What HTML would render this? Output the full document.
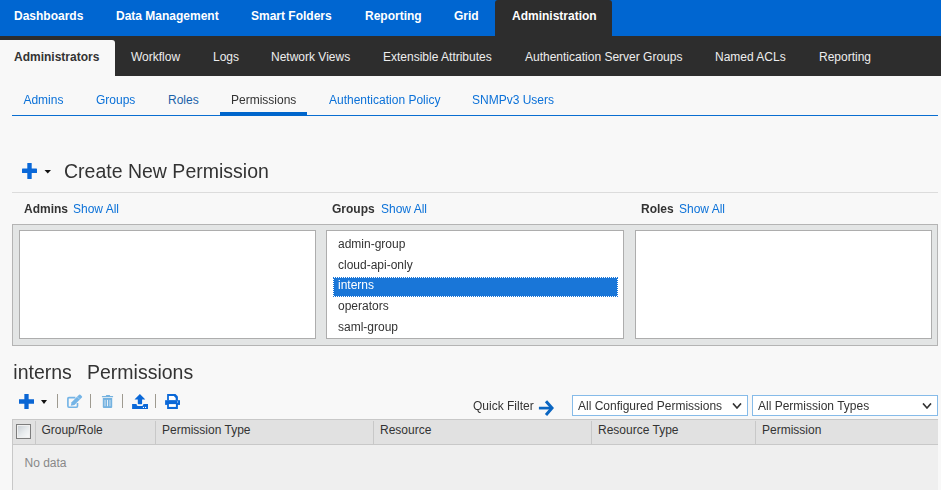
<!DOCTYPE html>
<html><head><meta charset="utf-8">
<style>
html,body{margin:0;padding:0;}
body{width:941px;height:490px;overflow:hidden;position:relative;background:#f8f8f8;font-family:"Liberation Sans",sans-serif;font-size:12px;color:#333;}
.a{position:absolute;}
.t{position:absolute;white-space:nowrap;line-height:16px;font-size:12px;}
.b{font-weight:bold;}
.w{color:#fff;}
.lk{color:#0b71d8;}
.dk{color:#333;}
</style></head><body>

<!-- top nav -->
<div class="a" style="left:0;top:0;width:941px;height:36px;background:#0066d1;"></div>
<div class="a" style="left:495px;top:0;width:117px;height:36px;background:#2d2d2d;border-radius:3px 3px 0 0;"></div>
<div class="t b w" style="left:14px;top:8px;">Dashboards</div>
<div class="t b w" style="left:116px;top:8px;">Data Management</div>
<div class="t b w" style="left:251px;top:8px;">Smart Folders</div>
<div class="t b w" style="left:365px;top:8px;">Reporting</div>
<div class="t b w" style="left:454px;top:8px;">Grid</div>
<div class="t b w" style="left:512px;top:8px;">Administration</div>

<!-- second nav -->
<div class="a" style="left:0;top:36px;width:941px;height:40px;background:#2d2d2d;"></div>
<div class="a" style="left:0;top:40px;width:115px;height:36px;background:#f8f8f8;border-radius:0 3px 0 0;"></div>
<div class="t b dk" style="left:14px;top:49px;">Administrators</div>
<div class="t w" style="left:131px;top:49px;color:#eee;">Workflow</div>
<div class="t w" style="left:213px;top:49px;color:#eee;">Logs</div>
<div class="t w" style="left:271px;top:49px;color:#eee;">Network Views</div>
<div class="t w" style="left:383px;top:49px;color:#eee;">Extensible Attributes</div>
<div class="t w" style="left:525px;top:49px;color:#eee;">Authentication Server Groups</div>
<div class="t w" style="left:715px;top:49px;color:#eee;">Named ACLs</div>
<div class="t w" style="left:819px;top:49px;color:#eee;">Reporting</div>

<div class="t" style="left:168px;top:92px;color:#1a62a8;">Roles</div>
<div style="position:absolute;left:0;top:0;width:941px;height:490px;will-change:transform;">
<!-- tabs -->
<div class="t lk" style="left:23.4px;top:92px;">Admins</div>
<div class="t lk" style="left:96px;top:92px;">Groups</div>
<div class="t dk" style="left:231px;top:92px;">Permissions</div>
<div class="t lk" style="left:329px;top:92px;">Authentication Policy</div>
<div class="t lk" style="left:472px;top:92px;">SNMPv3 Users</div>
<div class="a" style="left:12px;top:115px;width:926px;height:1px;background:#0a6ed1;"></div>
<div class="a" style="left:220px;top:112px;width:87px;height:4px;background:#0066cc;"></div>

<!-- create new permission -->
<svg class="a" style="left:22px;top:163px;" width="15" height="16" viewBox="0 0 15 16"><rect x="0" y="5.6" width="15" height="4.5" rx="0.6" fill="#0a68d8"/><rect x="5.3" y="0" width="4.4" height="16" rx="0.6" fill="#0a68d8"/></svg>
<svg class="a" style="left:44px;top:170px;" width="8" height="4" viewBox="0 0 8 4"><path d="M0.5 0h6.5L3.75 3.6z" fill="#111"/></svg>
<div class="t" style="left:64px;top:159px;font-size:19.5px;line-height:24px;color:#333;transform:scaleY(1.05);transform-origin:0 18.76px;">Create New Permission</div>
<div class="a" style="left:12px;top:192px;width:926px;height:1px;background:#dcdcdc;"></div>

<div class="t b dk" style="left:24px;top:201px;">Admins</div>
<div class="t lk" style="left:73px;top:201px;">Show All</div>
<div class="t b dk" style="left:332px;top:201px;">Groups</div>
<div class="t lk" style="left:381px;top:201px;">Show All</div>
<div class="t b dk" style="left:641px;top:201px;">Roles</div>
<div class="t lk" style="left:679px;top:201px;">Show All</div>

<div class="a" style="left:12px;top:224px;width:924px;height:120px;background:#e3e5e5;border:1px solid #b4b4b4;"></div>
<div class="a" style="left:19px;top:230px;width:295px;height:107px;background:#fff;border:1px solid #adadad;"></div>
<div class="a" style="left:326px;top:230px;width:296px;height:107px;background:#fff;border:1px solid #adadad;"></div>
<div class="a" style="left:635px;top:230px;width:295px;height:107px;background:#fff;border:1px solid #adadad;"></div>

<div class="t" style="left:338px;top:236px;color:#333;">admin-group</div>
<div class="t" style="left:338px;top:256.7px;color:#333;">cloud-api-only</div>
<div class="a" style="left:333px;top:277px;width:283px;height:18px;background:#1976d8;background-clip:padding-box;border:1px dotted #1976d8;"></div>
<div class="t" style="left:338px;top:277.3px;color:#fff;">interns</div>
<div class="t" style="left:338px;top:297.9px;color:#333;">operators</div>
<div class="t" style="left:338px;top:318.5px;color:#333;">saml-group</div>

<!-- permissions section -->
<div class="t" style="left:13.3px;top:360px;font-size:19.5px;line-height:24px;color:#333;transform:scaleY(1.05);transform-origin:0 18.76px;">interns</div>
<div class="t" style="left:87px;top:360px;font-size:19.5px;line-height:24px;color:#333;transform:scaleY(1.05);transform-origin:0 18.76px;">Permissions</div>

<!-- toolbar -->
<svg class="a" style="left:19px;top:394px;" width="15" height="15" viewBox="0 0 15 15"><path d="M7.5 0v15M0 7.5h15" stroke="#0a66d4" stroke-width="4.3"/></svg>
<svg class="a" style="left:41px;top:400px;" width="6" height="4" viewBox="0 0 6 4"><path d="M0 0h6L3 4z" fill="#111"/></svg>
<div class="a" style="left:57px;top:394px;width:1px;height:14px;background:#9e9a90;"></div>
<svg class="a" style="left:64px;top:392px;" width="20" height="18" viewBox="0 0 20 18"><path d="M11.4 5.6H5Q3.9 5.6 3.9 6.7V14.1Q3.9 15.2 5 15.2H12.4Q13.5 15.2 13.5 14.1V11" fill="none" stroke="#74b4e6" stroke-width="1.65"/><g transform="translate(-0.4,1)"><path d="M7.2 12.8L8 9.17 15.44 1.74Q16.1 1.1 16.8 1.74L18.3 3.2Q18.9 3.9 18.26 4.56L10.83 11.99z" fill="#74b4e6"/><path d="M13.5 3.7L16.3 6.5" stroke="#cfe4f5" stroke-width="0.6"/></g></svg>
<div class="a" style="left:90px;top:394px;width:1px;height:14px;background:#9e9a90;"></div>
<svg class="a" style="left:98px;top:392px;" width="20" height="18" viewBox="0 0 20 18"><rect x="7.9" y="3.1" width="4.2" height="1.4" rx="0.6" fill="#74b2e0"/><rect x="3.9" y="3.9" width="11.2" height="1.3" rx="0.5" fill="#74b2e0"/><path d="M4.8 6.1H14.2V15Q14.2 16 13.2 16H5.8Q4.8 16 4.8 15z" fill="#74b2e0"/><rect x="6.5" y="7.9" width="1.1" height="6.3" fill="#c4ddf0"/><rect x="9" y="7.9" width="1" height="6.3" fill="#e6f0f8"/><rect x="11.4" y="7.9" width="1.1" height="6.3" fill="#c4ddf0"/></svg>
<div class="a" style="left:122px;top:394px;width:1px;height:14px;background:#9e9a90;"></div>
<svg class="a" style="left:129px;top:391px;" width="22" height="20" viewBox="0 0 22 20"><path d="M10.9 3.1L5.7 8.2Q5.5 8.6 6 8.6H8.8V12.6Q8.8 13.3 9.5 13.3H12.4Q13.1 13.3 13.1 12.6V8.6H15.8Q16.3 8.6 16.1 8.2z" fill="#0a68d8"/><path d="M3.1 12.9H7.6V13.6Q7.6 14.9 8.9 14.9H13Q14.3 14.9 14.3 13.6V12.9H19V18H3.1z" fill="#0a68d8"/><rect x="13.9" y="15.9" width="1.1" height="1.1" fill="#fff"/><rect x="16" y="15.9" width="1.1" height="1.1" fill="#fff"/></svg>
<div class="a" style="left:155px;top:394px;width:1px;height:14px;background:#9e9a90;"></div>
<svg class="a" style="left:162px;top:391px;" width="22" height="20" viewBox="0 0 22 20"><path d="M5.1 3.1H13.5L15.9 5.5V9.4H5.1z" fill="#0a68d8"/><path d="M6.9 5.1H11.8L13.7 7V9.2H6.9z" fill="#fff"/><rect x="3.1" y="9.2" width="14.9" height="4.7" fill="#0a68d8"/><rect x="15.1" y="10.2" width="1" height="1.6" fill="#9cc4f0"/><path d="M5.1 13.1H15.9V18H5.1z" fill="#0a68d8"/><rect x="6.9" y="13.1" width="7" height="2.8" fill="#fff"/></svg>

<!-- quick filter -->
<div class="t dk" style="left:473px;top:398px;">Quick Filter</div>
<svg class="a" style="left:535px;top:396px;" width="24" height="24" viewBox="0 0 24 24"><path d="M3.9 12.1H16" fill="none" stroke="#0b66c2" stroke-width="2.7"/><path d="M11 5.2L17 12.05 11 18.9" fill="none" stroke="#0b66c2" stroke-width="3"/></svg>
<div class="a" style="left:572px;top:395px;width:174px;height:19px;background:#fff;border:1px solid #86bbe9;"></div>
<div class="t dk" style="left:578px;top:398px;">All Configured Permissions</div>
<svg class="a" style="left:732px;top:403px;" width="10" height="6" viewBox="0 0 10 6"><path d="M1 0.4l4 4.6 4-4.6" fill="none" stroke="#333" stroke-width="1.6"/></svg>
<div class="a" style="left:752px;top:395px;width:184px;height:19px;background:#fff;border:1px solid #86bbe9;"></div>
<div class="t dk" style="left:758px;top:398px;">All Permission Types</div>
<svg class="a" style="left:922px;top:403px;" width="10" height="6" viewBox="0 0 10 6"><path d="M1 0.4l4 4.6 4-4.6" fill="none" stroke="#333" stroke-width="1.6"/></svg>

</div>
<!-- table -->
<div class="a" style="left:12px;top:419px;width:926px;height:71px;background:#efefef;"></div>
<div class="a" style="left:12px;top:419px;width:926px;height:25px;background:#e1e1e1;border-top:1px solid #c8c8c8;border-bottom:1px solid #c8c8c8;box-sizing:border-box;height:26px;"></div>
<div class="a" style="left:12px;top:419px;width:1px;height:71px;background:#c8c8c8;"></div>
<div class="a" style="left:35px;top:421px;width:1px;height:23px;background:#c8c8c8;"></div>
<div class="a" style="left:155px;top:421px;width:1px;height:23px;background:#c8c8c8;"></div>
<div class="a" style="left:373px;top:421px;width:1px;height:23px;background:#c8c8c8;"></div>
<div class="a" style="left:591px;top:421px;width:1px;height:23px;background:#c8c8c8;"></div>
<div class="a" style="left:755px;top:421px;width:1px;height:23px;background:#c8c8c8;"></div>
<div class="a" style="left:16px;top:424px;width:13px;height:13px;border:1px solid #7d7d7d;background:linear-gradient(135deg,#c6ccd2 0%,#e9ecee 55%,#fbfbfb 100%);box-shadow:inset 0 0 0 1px #f0f0f0;"></div>
<div class="t dk" style="left:41.4px;top:422px;">Group/Role</div>
<div class="t dk" style="left:162px;top:422px;">Permission Type</div>
<div class="t dk" style="left:380px;top:422px;">Resource</div>
<div class="t dk" style="left:598px;top:422px;">Resource Type</div>
<div class="t dk" style="left:762px;top:422px;">Permission</div>
<div class="t" style="left:24.5px;top:455.4px;color:#888;">No data</div>

</body></html>
